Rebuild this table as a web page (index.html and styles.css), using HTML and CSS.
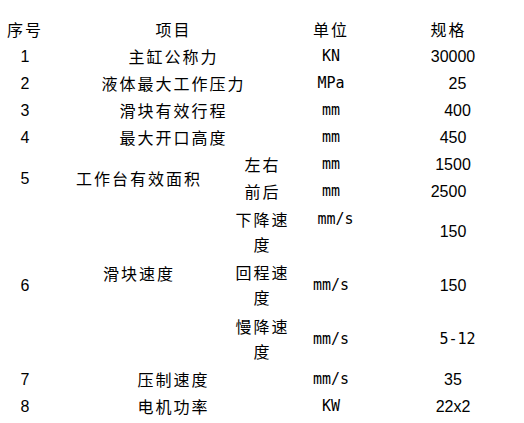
FILE: index.html
```html
<!DOCTYPE html>
<html lang="zh-CN">
<head>
<meta charset="utf-8">
<title>主要技术参数</title>
<link rel="stylesheet" href="styles.css">
</head>
<body>
<table class="spec">
  <colgroup>
    <col class="c-no">
    <col class="c-item">
    <col class="c-sub">
    <col class="c-unit">
    <col class="c-val">
  </colgroup>
  <thead>
    <tr class="r">
      <th class="zh">序号</th>
      <th class="zh" colspan="2">项目</th>
      <th class="zh">单位</th>
      <th class="zh val trail">规格</th>
    </tr>
  </thead>
  <tbody>
    <tr class="r">
      <td class="num">1</td>
      <td class="zh" colspan="2">主缸公称力</td>
      <td class="unit">KN</td>
      <td class="num val">30000</td>
    </tr>
    <tr class="r">
      <td class="num">2</td>
      <td class="zh" colspan="2">液体最大工作压力</td>
      <td class="unit">MPa</td>
      <td class="num val lead">25</td>
    </tr>
    <tr class="r">
      <td class="num">3</td>
      <td class="zh" colspan="2">滑块有效行程</td>
      <td class="unit">mm</td>
      <td class="num val lead">400</td>
    </tr>
    <tr class="r">
      <td class="num">4</td>
      <td class="zh" colspan="2">最大开口高度</td>
      <td class="unit">mm</td>
      <td class="num val">450</td>
    </tr>
    <tr class="r">
      <td class="num" rowspan="2">5</td>
      <td class="zh" rowspan="2">工作台有效面积</td>
      <td class="zh">左右</td>
      <td class="unit">mm</td>
      <td class="num val">1500</td>
    </tr>
    <tr class="r">
      <td class="zh">前后</td>
      <td class="unit">mm</td>
      <td class="num val trail">2500</td>
    </tr>
    <tr class="r6a">
      <td class="num" rowspan="3">6</td>
      <td class="zh lift" rowspan="3">滑块速度</td>
      <td class="zh">下降速度</td>
      <td class="unit lift indent">mm/s</td>
      <td class="num val">150</td>
    </tr>
    <tr class="r6b">
      <td class="zh">回程速度</td>
      <td class="unit">mm/s</td>
      <td class="num val">150</td>
    </tr>
    <tr class="r6b">
      <td class="zh">慢降速度</td>
      <td class="unit">mm/s</td>
      <td class="num val lead range">5-12</td>
    </tr>
    <tr class="r">
      <td class="num">7</td>
      <td class="zh" colspan="2">压制速度</td>
      <td class="unit">mm/s</td>
      <td class="num val">35</td>
    </tr>
    <tr class="r">
      <td class="num">8</td>
      <td class="zh" colspan="2">电机功率</td>
      <td class="unit">KW</td>
      <td class="num val">22x2</td>
    </tr>
  </tbody>
</table>
</body>
</html>
```

FILE: styles.css
```css
html, body {
  margin: 0;
  padding: 0;
  background: #ffffff;
}

body {
  color: #000000;
  font-family: "Liberation Sans", "Noto Sans CJK SC", sans-serif;
}

.spec {
  margin-top: 16px;
  width: 524px;
  table-layout: fixed;
  border-collapse: collapse;
  border-spacing: 0;
}

.c-no { width: 50px; }
.c-item { width: 178px; }
.c-sub { width: 69px; }
.c-unit { width: 68px; }
.c-val { width: 159px; }

.spec th,
.spec td {
  padding: 0;
  text-align: center;
  vertical-align: middle;
  font-weight: normal;
  line-height: 25px;
}

tr.r { height: 27px; }
tr.r6a { height: 53px; }
tr.r6b { height: 54px; }

.zh {
  font-family: "Noto Sans CJK SC", sans-serif;
  font-size: 16px;
  letter-spacing: 2px;
}

.num {
  font-family: "Liberation Sans", sans-serif;
  font-size: 16px;
}

.unit {
  font-family: "DejaVu Sans Mono", monospace;
  font-size: 15px;
}

.spec .range {
  font-family: "DejaVu Sans Mono", monospace;
  font-size: 15px;
}

.spec .val { padding-left: 17px; }
.spec .val.lead { padding-left: 26px; }
.spec .val.trail { padding-left: 8px; }

.spec .lift { padding-bottom: 25px; }
.spec .indent { padding-left: 9px; }
```
